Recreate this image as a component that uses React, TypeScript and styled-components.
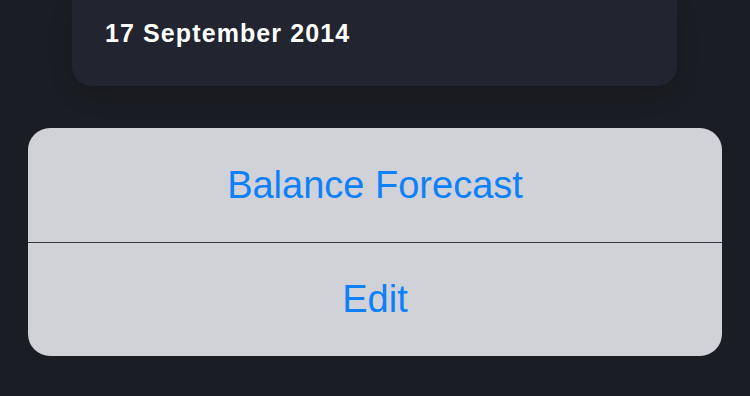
import styled, { createGlobalStyle } from 'styled-components';

const GlobalStyle = createGlobalStyle`
    html, body {
        margin: 0;
        padding: 0;
        background-color: #1b1d24;
    }

    body {
        font-family: "Liberation Sans", Arial, sans-serif;
        -webkit-font-smoothing: antialiased;
    }
`;

function App(){
    return(
        <>
            <GlobalStyle />
            <Screen>
                <DateCard>
                    <DateText>17 September 2014</DateText>
                </DateCard>
                <ActionSheet>
                    <ActionButton type="button">Balance Forecast</ActionButton>
                    <Divider />
                    <ActionButton type="button">Edit</ActionButton>
                </ActionSheet>
            </Screen>
        </>
    )
}

const Screen = styled.main`
    width: 750px;
    height: 396px;
    overflow: hidden;
    display: flex;
    flex-direction: column;
    background-color: #1b1d24;
`;

const DateCard = styled.section`
    margin: 0 73px 0 72px;
    height: 86px;
    box-sizing: border-box;
    padding: 19px 33px 0;
    background-color: #22252f;
    border-radius: 0 0 20px 20px;
    box-shadow: 0 10px 24px rgba(0, 0, 0, 0.12);
`;

const DateText = styled.h2`
    margin: 0;
    color: #ffffff;
    font-size: 25px;
    line-height: 28px;
    font-weight: 700;
    letter-spacing: 1.1px;
`;

const ActionSheet = styled.div`
    margin: 42px 28px 0;
    height: 228px;
    display: flex;
    flex-direction: column;
    background-color: #d1d2d7;
    border-radius: 22px;
    overflow: hidden;
`;

const ActionButton = styled.button`
    flex: 1;
    display: flex;
    align-items: center;
    justify-content: center;
    border: none;
    background: transparent;
    padding: 0;
    color: #0d80fb;
    font-family: "Liberation Sans", Arial, sans-serif;
    font-size: 38px;
    line-height: 1;
    cursor: pointer;
`;

const Divider = styled.hr`
    margin: 0;
    border: none;
    height: 1px;
    background-color: #363846;
`;

export default App;
